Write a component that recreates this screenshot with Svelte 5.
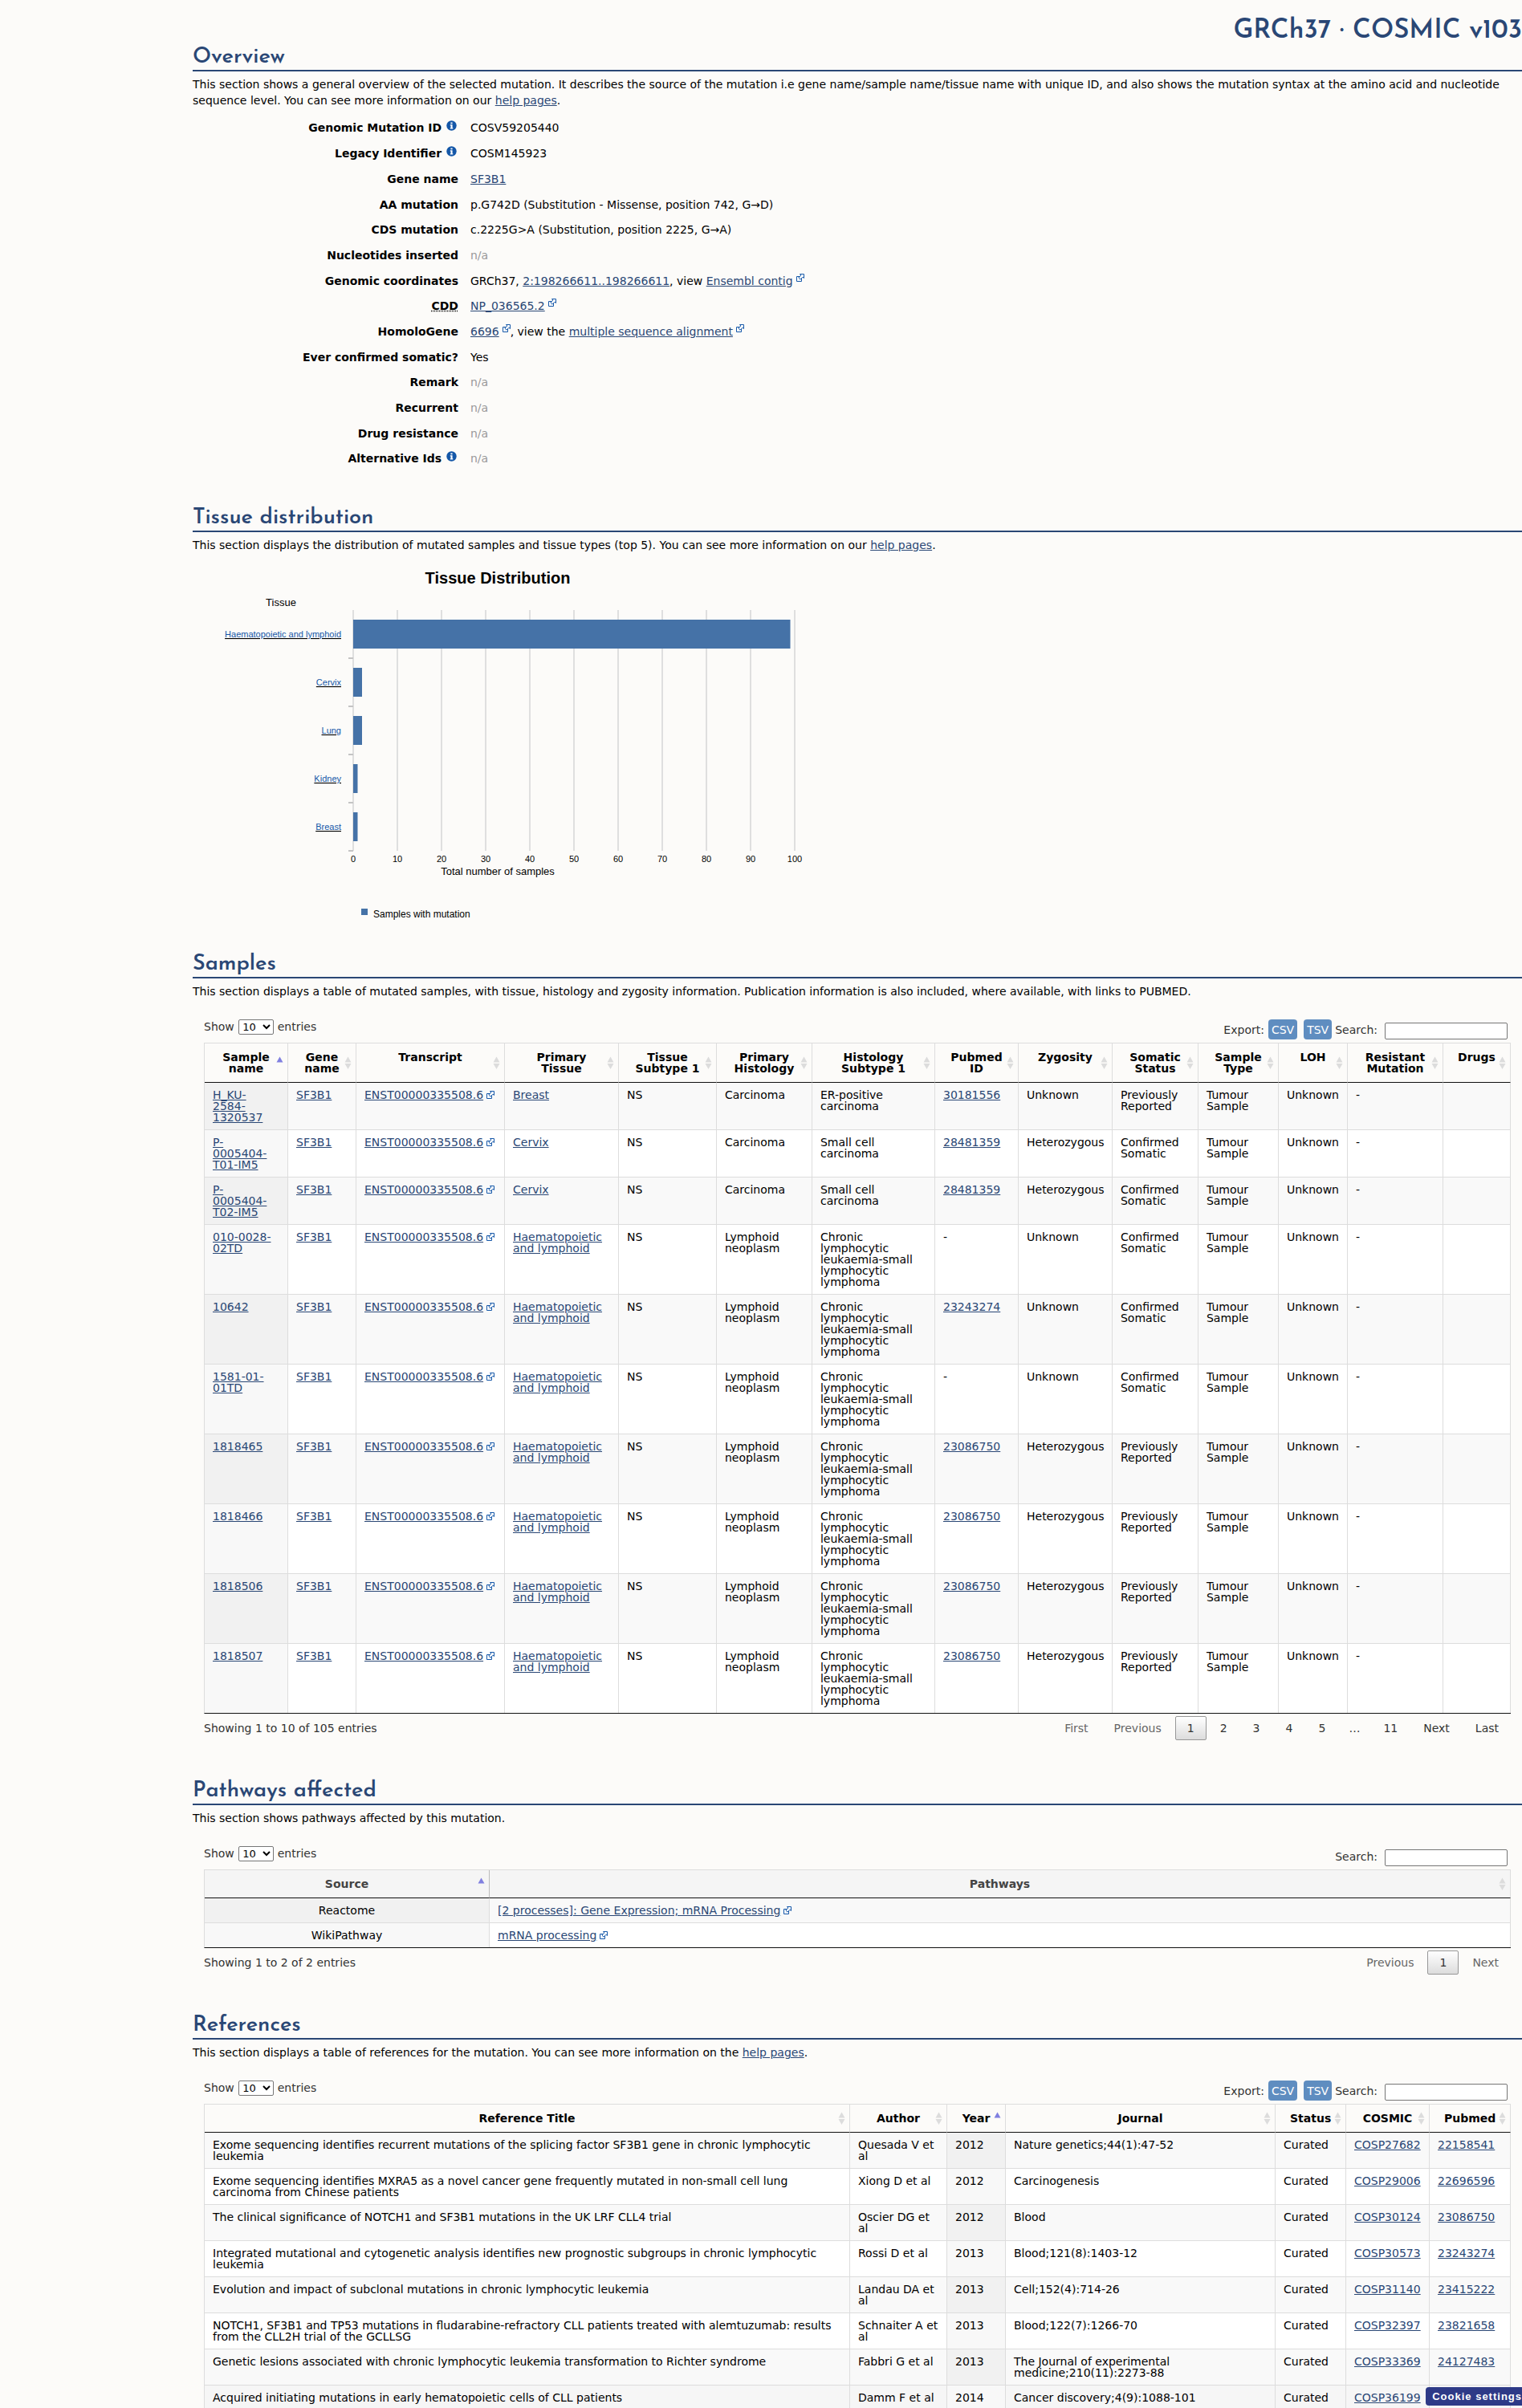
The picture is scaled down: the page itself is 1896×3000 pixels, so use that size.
<script>
    // Overview rows: label, optional info marker, value parts
    const NA = [{ text: 'n/a', muted: true }];
    const overview = [
        { label: 'Genomic Mutation ID', info: true, parts: [{ text: 'COSV59205440' }] },
        { label: 'Legacy Identifier', info: true, parts: [{ text: 'COSM145923' }] },
        { label: 'Gene name', parts: [{ text: 'SF3B1', link: true }] },
        { label: 'AA mutation', parts: [{ text: 'p.G742D (Substitution - Missense, position 742, G→D)' }] },
        { label: 'CDS mutation', parts: [{ text: 'c.2225G>A (Substitution, position 2225, G→A)' }] },
        { label: 'Nucleotides inserted', parts: NA },
        {
            label: 'Genomic coordinates',
            parts: [
                { text: 'GRCh37, ' },
                { text: '2:198266611..198266611', link: true },
                { text: ', view ' },
                { text: 'Ensembl contig', link: true, ext: true },
            ],
        },
        { label: 'CDD', abbr: 'Conserved Domain Database', parts: [{ text: 'NP_036565.2', link: true, ext: true }] },
        {
            label: 'HomoloGene',
            parts: [
                { text: '6696', link: true, ext: true },
                { text: ', view the ' },
                { text: 'multiple sequence alignment', link: true, ext: true },
            ],
        },
        { label: 'Ever confirmed somatic?', parts: [{ text: 'Yes' }] },
        { label: 'Remark', parts: NA },
        { label: 'Recurrent', parts: NA },
        { label: 'Drug resistance', parts: NA },
        { label: 'Alternative Ids', info: true, parts: NA },
    ];

    // Tissue chart
    const tissues = [
        { name: 'Haematopoietic and lymphoid', count: 99 },
        { name: 'Cervix', count: 2 },
        { name: 'Lung', count: 2 },
        { name: 'Kidney', count: 1 },
        { name: 'Breast', count: 1 },
    ];
    const axis = [0, 10, 20, 30, 40, 50, 60, 70, 80, 90, 100];
    const plot = { left: 200, top: 71, step: 60, bar: 36, unit: 5.5 };
    const plotBottom = plot.top + plot.step * tissues.length;

    // Samples table
    const sampleCols = [
        { name: 'Sample name', width: 104, sorted: true },
        { name: 'Gene name', width: 85 },
        { name: 'Transcript', width: 185 },
        { name: 'Primary Tissue', width: 142 },
        { name: 'Tissue Subtype 1', width: 122 },
        { name: 'Primary Histology', width: 119 },
        { name: 'Histology Subtype 1', width: 153 },
        { name: 'Pubmed ID', width: 104 },
        { name: 'Zygosity', width: 117 },
        { name: 'Somatic Status', width: 107 },
        { name: 'Sample Type', width: 100 },
        { name: 'LOH', width: 86 },
        { name: 'Resistant Mutation', width: 119 },
        { name: 'Drugs', width: 84 },
    ];

    const HAEM = 'Haematopoietic and lymphoid';
    const LN = 'Lymphoid neoplasm';
    const CLL = 'Chronic lymphocytic leukaemia-small lymphocytic lymphoma';
    const PREV = 'Previously Reported';
    const CONF = 'Confirmed Somatic';

    // name, tissue, histology, histology subtype, pubmed, zygosity, somatic status
    const samples = [
        ['H_KU-\n2584-\n1320537', 'Breast', 'Carcinoma', 'ER-positive carcinoma', '30181556', 'Unknown', PREV],
        ['P-\n0005404-\nT01-IM5', 'Cervix', 'Carcinoma', 'Small cell carcinoma', '28481359', 'Heterozygous', CONF],
        ['P-\n0005404-\nT02-IM5', 'Cervix', 'Carcinoma', 'Small cell carcinoma', '28481359', 'Heterozygous', CONF],
        ['010-0028-\n02TD', HAEM, LN, CLL, '-', 'Unknown', CONF],
        ['10642', HAEM, LN, CLL, '23243274', 'Unknown', CONF],
        ['1581-01-\n01TD', HAEM, LN, CLL, '-', 'Unknown', CONF],
        ['1818465', HAEM, LN, CLL, '23086750', 'Heterozygous', PREV],
        ['1818466', HAEM, LN, CLL, '23086750', 'Heterozygous', PREV],
        ['1818506', HAEM, LN, CLL, '23086750', 'Heterozygous', PREV],
        ['1818507', HAEM, LN, CLL, '23086750', 'Heterozygous', PREV],
    ];

    // Pathways table
    const pathwayCols = [
        { name: 'Source', width: 355, sorted: true },
        { name: 'Pathways', width: 1272 },
    ];
    const pathways = [
        ['Reactome', '[2 processes]: Gene Expression; mRNA Processing'],
        ['WikiPathway', 'mRNA processing'],
    ];

    // References table
    const refCols = [
        { name: 'Reference Title', width: 804 },
        { name: 'Author', width: 121 },
        { name: 'Year', width: 73, sorted: true },
        { name: 'Journal', width: 336 },
        { name: 'Status', width: 88 },
        { name: 'COSMIC', width: 104 },
        { name: 'Pubmed', width: 101 },
    ];
    const references = [
        ['Exome sequencing identifies recurrent mutations of the splicing factor SF3B1 gene in chronic lymphocytic leukemia', 'Quesada V et al', '2012', 'Nature genetics;44(1):47-52', 'COSP27682', '22158541'],
        ['Exome sequencing identifies MXRA5 as a novel cancer gene frequently mutated in non-small cell lung carcinoma from Chinese patients', 'Xiong D et al', '2012', 'Carcinogenesis', 'COSP29006', '22696596'],
        ['The clinical significance of NOTCH1 and SF3B1 mutations in the UK LRF CLL4 trial', 'Oscier DG et al', '2012', 'Blood', 'COSP30124', '23086750'],
        ['Integrated mutational and cytogenetic analysis identifies new prognostic subgroups in chronic lymphocytic leukemia', 'Rossi D et al', '2013', 'Blood;121(8):1403-12', 'COSP30573', '23243274'],
        ['Evolution and impact of subclonal mutations in chronic lymphocytic leukemia', 'Landau DA et al', '2013', 'Cell;152(4):714-26', 'COSP31140', '23415222'],
        ['NOTCH1, SF3B1 and TP53 mutations in fludarabine-refractory CLL patients treated with alemtuzumab: results from the CLL2H trial of the GCLLSG', 'Schnaiter A et al', '2013', 'Blood;122(7):1266-70', 'COSP32397', '23821658'],
        ['Genetic lesions associated with chronic lymphocytic leukemia transformation to Richter syndrome', 'Fabbri G et al', '2013', 'The Journal of experimental medicine;210(11):2273-88', 'COSP33369', '24127483'],
        ['Acquired initiating mutations in early hematopoietic cells of CLL patients', 'Damm F et al', '2014', 'Cancer discovery;4(9):1088-101', 'COSP36199', ''],
    ];

    function share(cols, col) {
        const total = cols.reduce((sum, c) => sum + c.width, 0);
        return (col.width / total) * 100;
    }
</script>

{#snippet ext()}<svg class="ext" width="10" height="10" viewBox="0 0 10 10" aria-hidden="true"><path d="M.5 3.5h6v6h-6z" /><path d="M4.5.5h5v5L8 4.2 5 7.2 2.8 5l3-3z" /></svg>{/snippet}

{#snippet link(text, external = false)}<a href="#top">{text}</a>{#if external}{@render ext()}{/if}{/snippet}

{#snippet toolbar(id, exports)}
    <div class="toolbar">
        <label class="length">Show
            <select id="{id}-length">
                <option>10</option>
                <option>25</option>
                <option>50</option>
                <option>100</option>
            </select>
            entries</label>
        <div class="tools">
            {#if exports}
                <span class="export">Export:</span>
                <button class="export-btn">CSV</button>
                <button class="export-btn">TSV</button>
            {/if}
            <label for="{id}-search">Search:</label>
            <input id="{id}-search" type="search" />
        </div>
    </div>
{/snippet}

{#snippet head(cols)}
    <colgroup>
        {#each cols as col}
            <col style="width: {share(cols, col)}%" />
        {/each}
    </colgroup>
    <thead>
        <tr>
            {#each cols as col}
                <th scope="col" aria-sort={col.sorted ? 'ascending' : undefined}>
                    <button class="sort">{col.name}</button>
                    <svg class="sort-icon" class:asc={col.sorted} width="9" height="16" viewBox="0 0 9 16" aria-hidden="true">
                        <path d="M4.5 0.5L8.5 7.5H0.5z" />
                        {#if !col.sorted}<path d="M0.5 9h8L4.5 16z" />{/if}
                    </svg>
                </th>
            {/each}
        </tr>
    </thead>
{/snippet}

{#snippet footer(info, pages)}
    <div class="footer">
        <div>{info}</div>
        <nav class="pager" aria-label="Table pages">
            {#each pages as [label, state]}
                {#if label === '…'}
                    <span class="gap">…</span>
                {:else}
                    <button class="page {state ?? ''}">{label}</button>
                {/if}
            {/each}
        </nav>
    </div>
{/snippet}

<main id="top">
    <h1>GRCh37 · COSMIC v103</h1>

    <section>
        <h2>Overview</h2>
        <p>This section shows a general overview of the selected mutation. It describes the source of the mutation i.e gene name/sample name/tissue name with unique ID, and also shows the mutation syntax at the amino acid and nucleotide sequence level. You can see more information on our {@render link('help pages')}.</p>
        <dl>
            {#each overview as row}
                <dt>
                    {#if row.abbr}<abbr title={row.abbr}>{row.label}</abbr>{:else}{row.label}{/if}
                    {#if row.info}
                        <svg class="info" width="13" height="13" viewBox="0 0 13 13" aria-label="info">
                            <circle cx="6.5" cy="6.5" r="6.2" fill="#1457a8" />
                            <path d="M5.4 2.4h2.2v1.9H5.4zM4.8 5.3h2.8v4h.7v1.1H4.8V9.3h.7V6.4h-.7z" fill="#fff" />
                        </svg>
                    {/if}
                </dt>
                <dd>{#each row.parts as part}{#if part.link}{@render link(part.text, part.ext)}{:else}<span class:muted={part.muted}>{part.text}</span>{/if}{/each}</dd>
            {/each}
        </dl>
    </section>

    <section>
        <h2>Tissue distribution</h2>
        <p>This section displays the distribution of mutated samples and tissue types (top 5). You can see more information on our {@render link('help pages')}.</p>
        <svg class="chart" width="800" height="455" role="img" aria-label="Tissue Distribution">
            <text class="chart-title" x="380" y="38">Tissue Distribution</text>
            <text class="axis-title" x="110" y="66">Tissue</text>
            {#each axis as tick}
                <rect x={plot.left + tick * plot.unit - 1} y={plot.top} width="2" height={plot.step * tissues.length} fill="#dfdfdf" />
                <text class="tick" x={plot.left + tick * plot.unit} y={plotBottom + 14}>{tick}</text>
            {/each}
            {#each tissues as tissue, i}
                <rect x={plot.left - 6} y={plot.top + plot.step * (i + 1) - 1} width="6" height="2" fill="#c4c4c4" />
                <rect
                    x={plot.left}
                    y={plot.top + plot.step * i + 12}
                    width={tissue.count * plot.unit}
                    height={plot.bar}
                    fill="#4572a7"
                />
                <a href="#top"><text class="tissue" x={plot.left - 15} y={plot.top + plot.step * i + 34}><tspan>{tissue.name}</tspan></text></a>
            {/each}
            <text class="axis-title" x="380" y={plotBottom + 30}>Total number of samples</text>
            <rect x="210" y="443" width="8" height="8" fill="#4572a7" />
            <text class="legend" x="225" y="454">Samples with mutation</text>
        </svg>
    </section>

    <section>
        <h2>Samples</h2>
        <p>This section displays a table of mutated samples, with tissue, histology and zygosity information. Publication information is also included, where available, with links to PUBMED.</p>
        <div class="wrapper">
            {@render toolbar('samples', true)}
            <table>
                {@render head(sampleCols)}
                <tbody>
                    {#each samples as [name, tissue, histology, subtype, pubmed, zygosity, status]}
                        <tr>
                            <td class="sorted name">{@render link(name)}</td>
                            <td>{@render link('SF3B1')}</td>
                            <td class="nowrap">{@render link('ENST00000335508.6', true)}</td>
                            <td>{@render link(tissue)}</td>
                            <td>NS</td>
                            <td>{histology}</td>
                            <td>{subtype}</td>
                            <td>{#if pubmed === '-'}-{:else}{@render link(pubmed)}{/if}</td>
                            <td>{zygosity}</td>
                            <td>{status}</td>
                            <td>Tumour Sample</td>
                            <td>Unknown</td>
                            <td>-</td>
                            <td></td>
                        </tr>
                    {/each}
                </tbody>
            </table>
            {@render footer('Showing 1 to 10 of 105 entries', [
                ['First', 'disabled'], ['Previous', 'disabled'], ['1', 'current'], ['2'], ['3'], ['4'], ['5'], ['…'], ['11'], ['Next'], ['Last'],
            ])}
        </div>
    </section>

    <section>
        <h2>Pathways affected</h2>
        <p>This section shows pathways affected by this mutation.</p>
        <div class="wrapper">
            {@render toolbar('pathways', false)}
            <table class="shaded">
                {@render head(pathwayCols)}
                <tbody>
                    {#each pathways as [source, pathway]}
                        <tr>
                            <td class="sorted center">{source}</td>
                            <td>{@render link(pathway, true)}</td>
                        </tr>
                    {/each}
                </tbody>
            </table>
            {@render footer('Showing 1 to 2 of 2 entries', [['Previous', 'disabled'], ['1', 'current'], ['Next', 'disabled']])}
        </div>
    </section>

    <section>
        <h2>References</h2>
        <p>This section displays a table of references for the mutation. You can see more information on the {@render link('help pages')}.</p>
        <div class="wrapper">
            {@render toolbar('references', true)}
            <table>
                {@render head(refCols)}
                <tbody>
                    {#each references as [title, author, year, journal, cosmic, pubmed], i}
                        <tr class:active={i === 7}>
                            <td>{title}</td>
                            <td>{author}</td>
                            <td class="sorted">{year}</td>
                            <td>{journal}</td>
                            <td>Curated</td>
                            <td>{@render link(cosmic)}</td>
                            <td>{#if pubmed}{@render link(pubmed)}{/if}</td>
                        </tr>
                    {/each}
                </tbody>
            </table>
        </div>
    </section>
</main>

<button class="cookie">Cookie settings</button>

<style>
    :global(body) {
        margin: 0;
        background: #fcfbf9;
    }
    main {
        padding-left: 240px;
        font: 14px/20px Verdana, "DejaVu Sans", sans-serif;
        color: #000;
    }
    button, input, select {
        font-family: inherit;
    }
    h1 {
        margin: 0 0 -6px;
        padding-top: 19px;
        font: 600 33px/40px "Josefin Sans", Lato, sans-serif;
        color: #2a4775;
        text-align: right;
    }
    h2 {
        margin: 0;
        padding-top: 4px;
        border-bottom: 2px solid #2a4775;
        font: 600 27px/30px "Josefin Sans", Lato, sans-serif;
        color: #2a4775;
    }
    section + section {
        margin-top: 39px;
    }
    p {
        margin: 6px 0 0;
    }
    a {
        color: #2a4775;
    }

    /* overview */
    dl {
        display: grid;
        grid-template-columns: 331px 1fr;
        grid-template-rows: 33px;
        grid-auto-rows: 32px 32px 31px;
        column-gap: 15px;
        align-items: center;
        margin: 7px 0 0;
        padding-bottom: 1px;
    }
    dt {
        font-weight: bold;
        text-align: right;
    }
    dd {
        margin: 0;
        white-space: pre-wrap;
    }
    abbr {
        text-decoration: underline dotted;
    }
    .muted {
        color: #999;
    }
    .info {
        margin: 0 2px 0 1px;
        vertical-align: 1px;
    }
    .ext {
        margin-left: 4px;
        fill: #fff;
        stroke: #1457a8;
    }
    dd .ext {
        vertical-align: 4px;
    }

    /* chart */
    .chart {
        display: block;
        overflow: visible;
        font-family: Arial, "Liberation Sans", sans-serif;
    }
    .chart-title {
        font-size: 20px;
        font-weight: bold;
        text-anchor: middle;
    }
    .axis-title {
        font-size: 13px;
        text-anchor: middle;
    }
    .tick {
        font-size: 11px;
        text-anchor: middle;
    }
    .chart a {
        text-decoration: none;
    }
    .tissue {
        font-size: 11px;
        text-anchor: end;
        fill: #000;
        text-decoration: underline;
    }
    .tissue tspan {
        fill: #1457a8;
    }
    .legend {
        font-size: 12px;
    }

    /* tables */
    .wrapper {
        margin: 25px 14px 0;
        color: #333;
    }
    .toolbar {
        display: flex;
        justify-content: space-between;
        height: 25px;
        margin-bottom: 4px;
    }
    .length {
        height: 19px;
        line-height: 19px;
    }
    .length select {
        box-sizing: border-box;
        width: 44px;
        height: 19px;
        margin: 0 0 0 1px;
        padding: 0;
        border: 1px solid #767676;
        border-radius: 2px;
        background: #fff;
        color: #000;
        font-size: 13px;
        vertical-align: top;
    }
    .tools {
        display: flex;
        align-items: center;
        padding-right: 4px;
    }
    .export {
        margin-right: 5px;
    }
    .export-btn {
        height: 25px;
        margin-right: 8px;
        padding: 0 4px;
        border: 0;
        border-radius: 4px;
        background: #5f8dc0;
        color: #fff;
        font-size: 14px;
    }
    .export-btn + label {
        margin-left: -4px;
    }
    .tools input {
        box-sizing: border-box;
        width: 153px;
        height: 21px;
        margin: 4px 0 0 9px;
        border: 1px solid #767676;
        border-radius: 2px;
        background: #fff;
    }
    table {
        width: 100%;
        table-layout: fixed;
        border-collapse: separate;
        border-spacing: 0;
        border: 1px solid #ddd;
        border-right: 0;
        border-bottom-color: #111;
        color: #000;
        line-height: 14px;
    }
    th, td {
        border-right: 1px solid #ddd;
        text-align: left;
        vertical-align: top;
    }
    th {
        position: relative;
        padding: 0;
        border-bottom: 1px solid #111;
    }
    .sort {
        display: block;
        width: 100%;
        padding: 10px 18px;
        border: 0;
        background: none;
        color: inherit;
        font: inherit;
        text-align: center;
        cursor: pointer;
    }
    .sort-icon {
        position: absolute;
        top: 50%;
        right: 5px;
        margin-top: -8px;
        fill: #dcdcdc;
    }
    .sort-icon.asc {
        fill: #8080e0;
    }
    td {
        padding: 8px 10px;
    }
    tbody tr + tr td {
        border-top: 1px solid #ddd;
    }
    tbody tr {
        background: #fff;
    }
    tbody tr:nth-child(odd) {
        background: #f9f9f9;
    }
    tbody tr.active {
        background: #f6f6f6;
    }
    .sorted {
        background: #f8f8f8;
    }
    tr:nth-child(odd) .sorted {
        background: #f1f1f1;
    }
    .name {
        white-space: pre-line;
    }
    .nowrap {
        white-space: nowrap;
    }
    .center {
        text-align: center;
    }
    .shaded th {
        background: #f5f5f5;
        color: #444;
    }
    .shaded th:first-child {
        border-right-color: #bbb;
    }

    .footer {
        display: flex;
        justify-content: space-between;
        margin-top: 3px;
        padding-bottom: 6px;
        line-height: 30px;
    }
    .pager {
        display: flex;
        gap: 2px;
    }
    .page {
        box-sizing: border-box;
        height: 30px;
        padding: 0 14px;
        border: 1px solid transparent;
        border-radius: 2px;
        background: none;
        color: #333;
        font-size: 14px;
        cursor: pointer;
    }
    .page.disabled {
        color: #666;
        cursor: default;
    }
    .page.current {
        border-color: #979797;
        background: linear-gradient(#fff, #dcdcdc);
    }
    .gap {
        padding: 0 12px;
    }

    .cookie {
        position: fixed;
        right: 0;
        bottom: 3px;
        height: 23px;
        padding: 0 0 0 8px;
        border: 0;
        border-radius: 4px 0 0 4px;
        background: #2e3a87;
        color: #fff;
        font: bold 13px/23px Arial, "Liberation Sans", sans-serif;
        letter-spacing: 1px;
    }
</style>
